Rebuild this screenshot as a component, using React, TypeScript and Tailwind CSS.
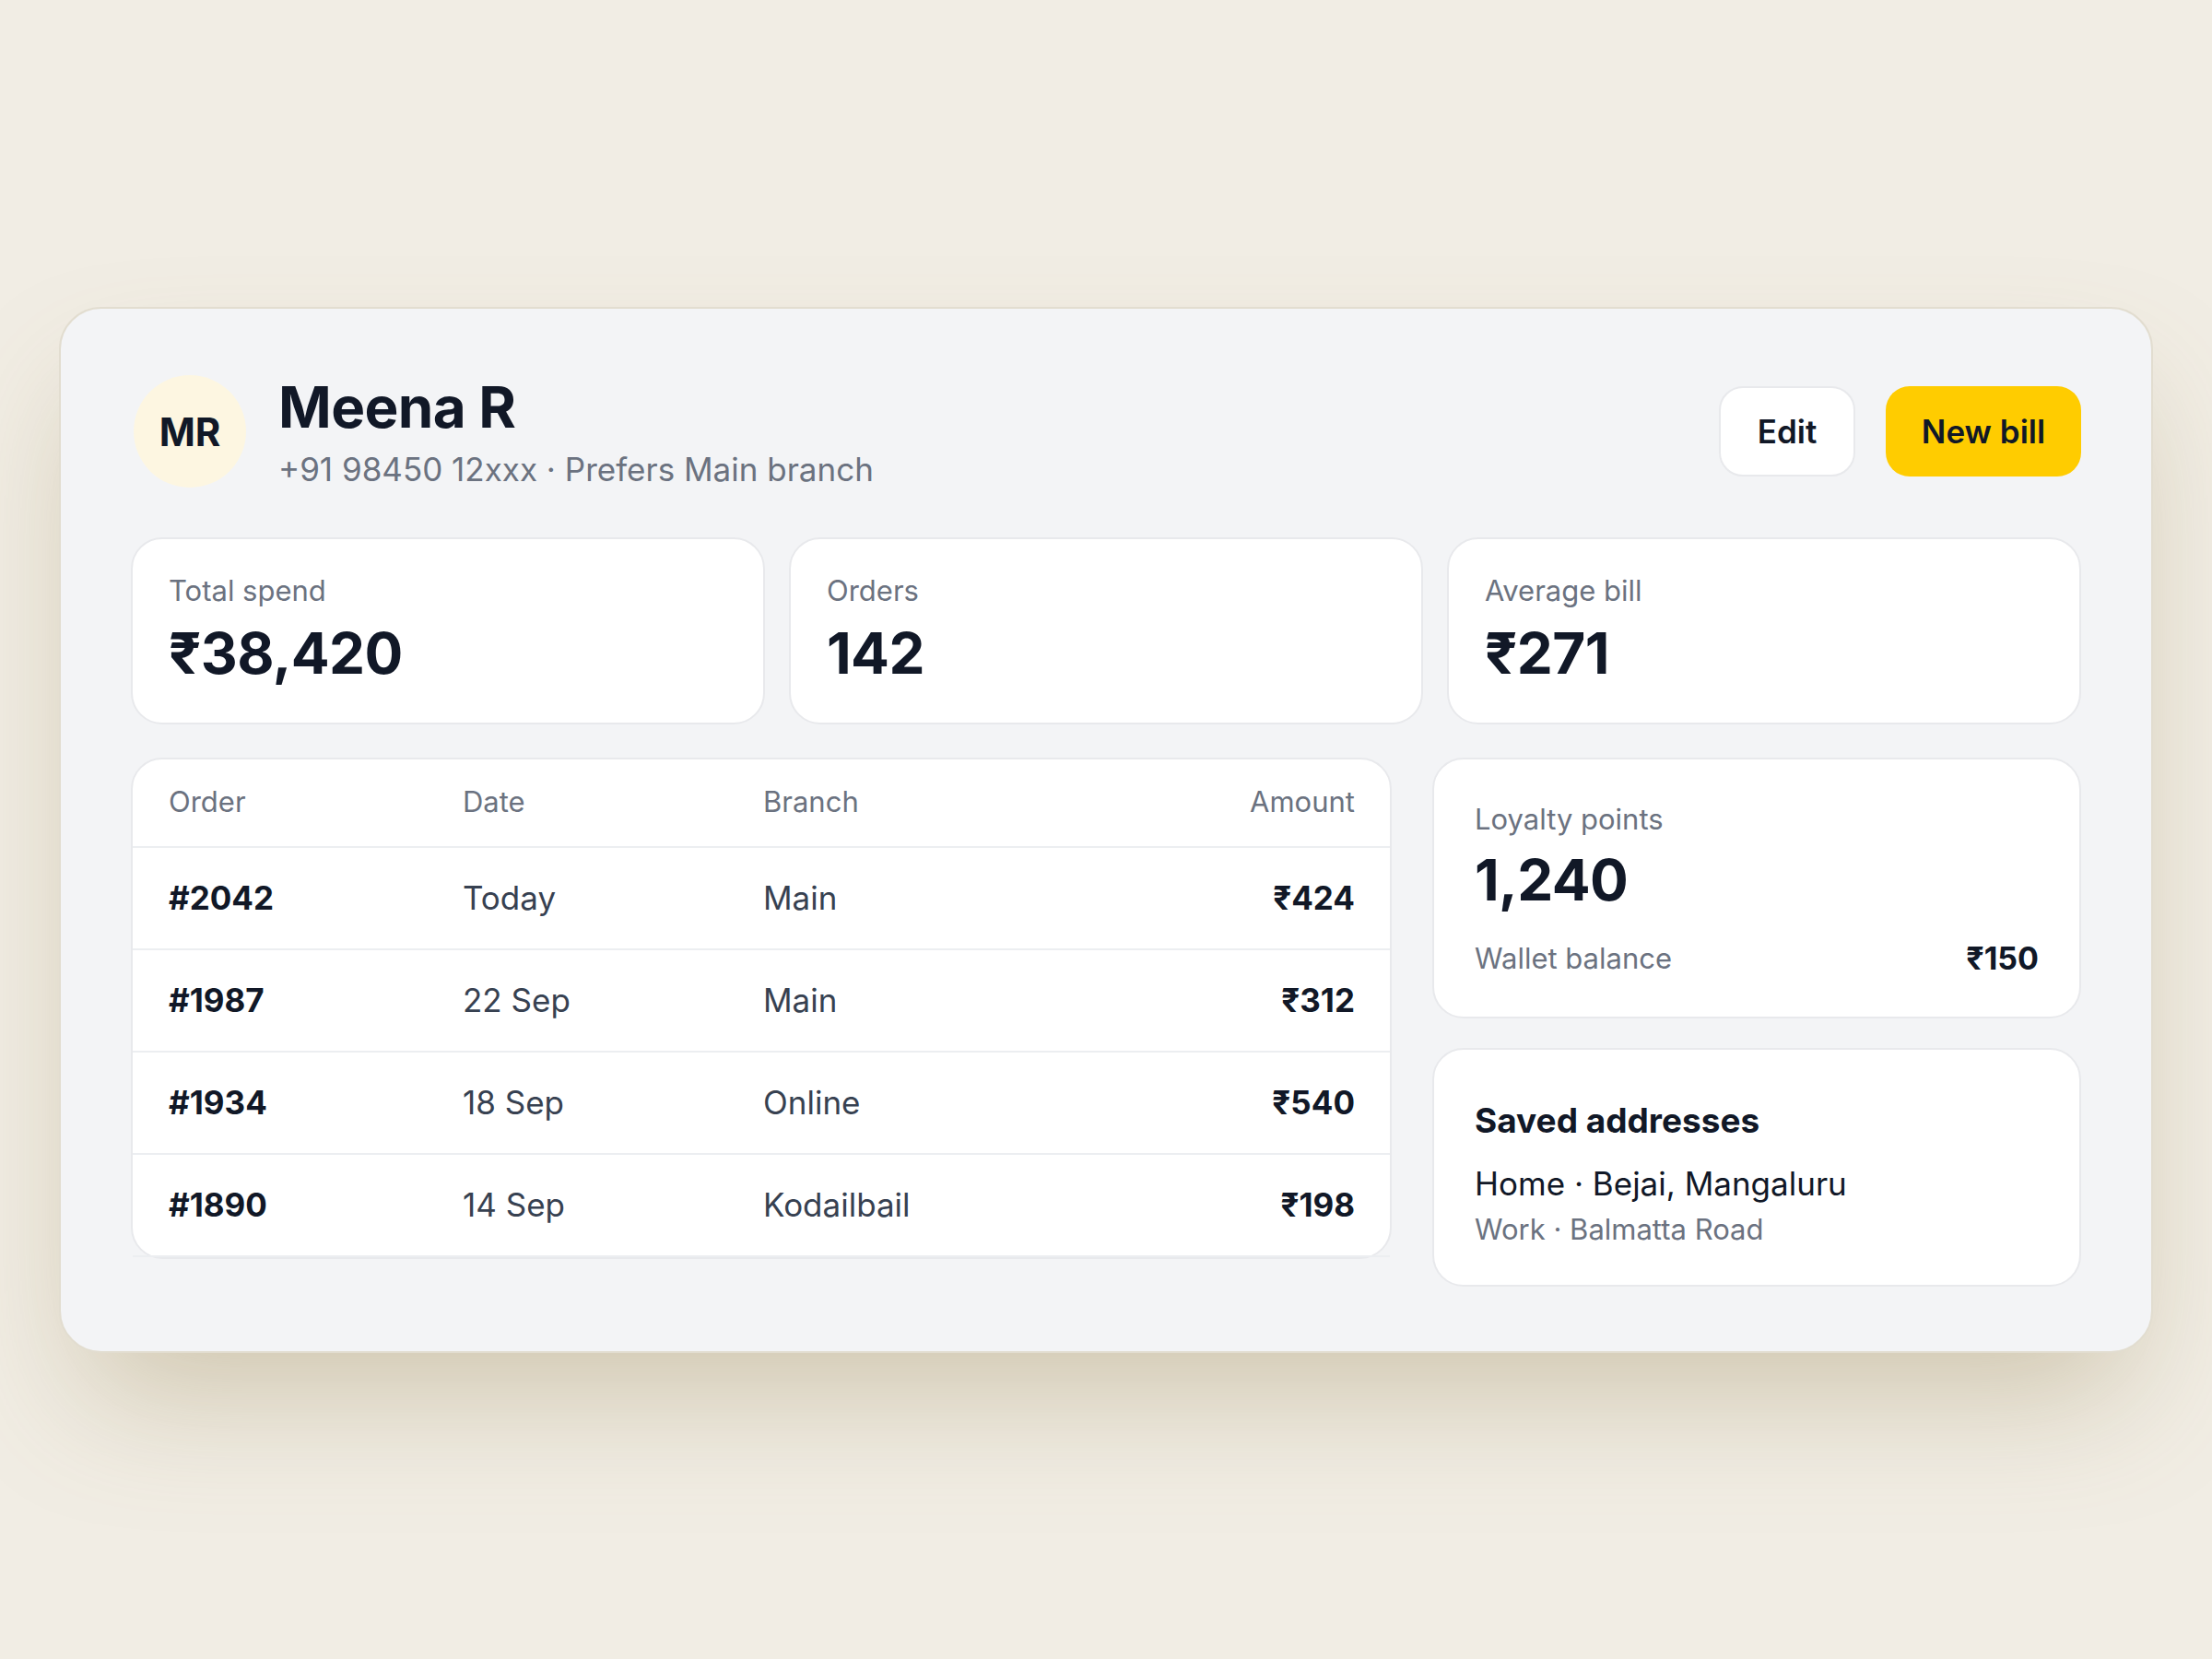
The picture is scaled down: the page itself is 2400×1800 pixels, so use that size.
const orders = [
  { id: '#2042', date: 'Today', branch: 'Main', amount: '₹424' },
  { id: '#1987', date: '22 Sep', branch: 'Main', amount: '₹312' },
  { id: '#1934', date: '18 Sep', branch: 'Online', amount: '₹540' },
  { id: '#1890', date: '14 Sep', branch: 'Kodailbail', amount: '₹198' },
];

const stats = [
  { label: 'Total spend', value: '₹38,420' },
  { label: 'Orders', value: '142' },
  { label: 'Average bill', value: '₹271' },
];

function StatCard({ label, value }: { label: string; value: string }) {
  return (
    <div className="h-[203px] rounded-[34px] border-2 border-[#e8e9ec] bg-white px-[39px] pt-[34px]">
      <div className="text-[31px] leading-[44px] text-[#6b7280]">{label}</div>
      <div className="mt-[6px] text-[62px] font-bold leading-[80px] tracking-[-0.01em] text-[#111827]">{value}</div>
    </div>
  );
}

export default function App() {
  return (
    <div
      className="flex min-h-screen w-full items-center justify-center bg-[#f1ede4]"
      style={{ fontFamily: 'Inter, "Noto Sans", "Liberation Sans", sans-serif' }}
    >
      <div className="w-[2272px] rounded-[46px] border-2 border-[#e2ddd0] bg-[#f3f4f6] px-[76px] pb-[70px] pt-[69px] shadow-[0_70px_140px_-30px_rgba(140,120,70,0.35)]">
        {/* header */}
        <div className="flex items-center justify-between pl-[3px]">
          <div className="flex items-center gap-[35px]">
            <div className="flex h-[122px] w-[122px] items-center justify-center rounded-full bg-[#fdf6e1] text-[42px] font-bold text-[#111827]">
              MR
            </div>
            <div>
              <div className="text-[62px] font-bold leading-[76px] tracking-[-0.01em] text-[#111827]">Meena R</div>
              <div className="mt-[5px] text-[35px] leading-[48px] text-[#6b7280]">+91 98450 12xxx · Prefers Main branch</div>
            </div>
          </div>
          <div className="flex items-center gap-[33px]">
            <button className="h-[98px] w-[148px] rounded-[26px] border-2 border-[#e8e9ec] bg-white text-[35px] font-semibold text-[#111827]">
              Edit
            </button>
            <button className="h-[98px] w-[212px] rounded-[26px] bg-[#ffcc00] text-[35px] font-semibold text-[#111827]">
              New bill
            </button>
          </div>
        </div>

        {/* stats */}
        <div className="mt-[50px] grid grid-cols-3 gap-[26px]">
          {stats.map((s) => (
            <StatCard key={s.label} label={s.label} value={s.value} />
          ))}
        </div>

        {/* orders + side */}
        <div className="mt-[36px] grid grid-cols-[1368px_1fr] items-start gap-[44px]">
          <div className="rounded-[34px] border-2 border-[#e8e9ec] bg-white">
            <div className="grid h-[96px] grid-cols-[319px_326px_1fr_auto] items-center border-b-2 border-[#eceef1] pl-[39px] pr-[38px] text-[31px] text-[#6b7280]">
              <div>Order</div>
              <div>Date</div>
              <div>Branch</div>
              <div className="text-right">Amount</div>
            </div>
            {orders.map((o) => (
              <div
                key={o.id}
                className="grid h-[111px] grid-cols-[319px_326px_1fr_auto] items-center border-b-2 border-[#eceef1] pl-[39px] pr-[38px] text-[35px] text-[#374151]"
              >
                <div className="font-bold text-[#111827]">{o.id}</div>
                <div>{o.date}</div>
                <div>{o.branch}</div>
                <div className="text-right font-bold text-[#111827]">{o.amount}</div>
              </div>
            ))}
          </div>

          <div className="flex flex-col gap-[32px]">
            <div className="h-[283px] rounded-[34px] border-2 border-[#e8e9ec] bg-white px-[44px] pt-[43px]">
              <div className="text-[31px] leading-[44px] text-[#6b7280]">Loyalty points</div>
              <div className="mt-[4px] text-[62px] font-bold leading-[80px] tracking-[-0.01em] text-[#111827]">1,240</div>
              <div className="mt-[23px] flex items-center justify-between leading-[44px]">
                <span className="text-[31px] text-[#6b7280]">Wallet balance</span>
                <span className="text-[34px] font-bold text-[#111827]">₹150</span>
              </div>
            </div>
            <div className="h-[259px] rounded-[34px] border-2 border-[#e8e9ec] bg-white px-[44px] pt-[53px]">
              <div className="text-[37px] font-bold leading-[48px] text-[#111827]">Saved addresses</div>
              <div className="mt-[20px] text-[35px] leading-[48px] text-[#111827]">Home · Bejai, Mangaluru</div>
              <div className="mt-[4px] text-[31px] leading-[44px] text-[#6b7280]">Work · Balmatta Road</div>
            </div>
          </div>
        </div>
      </div>
    </div>
  );
}
